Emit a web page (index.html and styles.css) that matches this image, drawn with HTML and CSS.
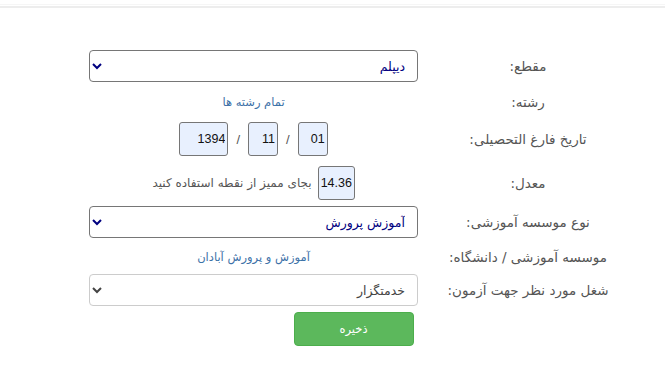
FILE: index.html
```html
<!DOCTYPE html>
<html lang="fa" dir="rtl">
<head>
    <meta charset="UTF-8">
    <meta name="viewport" content="width=device-width, initial-scale=1.0">
    <title>اطلاعات تحصیلی</title>
    <link rel="stylesheet" href="styles.css">
</head>
<body>
    <div class="topbar"></div>

    <!-- Education form -->
    <form class="edu-form" onsubmit="return false">
        <div class="row row-select">
            <label class="label" for="level">مقطع:</label>
            <div class="value">
                <select id="level" class="field field-navy">
                    <option>دیپلم</option>
                </select>
            </div>
        </div>

        <div class="row row-text">
            <span class="label">رشته:</span>
            <div class="value"><a href="#" class="link">تمام رشته ها</a></div>
        </div>

        <div class="row row-input">
            <span class="label">تاریخ فارغ التحصیلی:</span>
            <div class="value">
                <div class="date-group">
                    <input type="text" class="box box-sm" value="01">
                    <span class="slash">/</span>
                    <input type="text" class="box box-sm" value="11">
                    <span class="slash">/</span>
                    <input type="text" class="box box-lg" value="1394">
                </div>
            </div>
        </div>

        <div class="row row-input row-tight">
            <span class="label">معدل:</span>
            <div class="value">
                <div class="avg-group">
                    <input type="text" class="box box-md" value="14.36">
                    <span class="hint">بجای ممیز از نقطه استفاده کنید</span>
                </div>
            </div>
        </div>

        <div class="row row-select row-mid">
            <label class="label" for="inst-type">نوع موسسه آموزشی:</label>
            <div class="value">
                <select id="inst-type" class="field field-navy">
                    <option>آموزش پرورش</option>
                </select>
            </div>
        </div>

        <div class="row row-text row-short">
            <span class="label">موسسه آموزشی / دانشگاه:</span>
            <div class="value"><a href="#" class="link">آموزش و پرورش آبادان</a></div>
        </div>

        <div class="row row-select row-tight">
            <label class="label" for="job">شغل مورد نظر جهت آزمون:</label>
            <div class="value">
                <select id="job" class="field field-light">
                    <option>خدمتگزار</option>
                </select>
            </div>
        </div>

        <div class="actions">
            <button type="submit" class="btn-save">ذخیره</button>
        </div>
    </form>
</body>
</html>
```

FILE: styles.css
```css
/* Page */
body {
    margin: 0;
    padding: 0;
    background-color: #fff;
    font-family: "DejaVu Sans", sans-serif;
    color: #555;
}

.topbar {
    margin-top: 4px;
    height: 1px;
    border-top: 1px solid #f6f6f6;
    border-bottom: 2px solid #ededed;
}

/* Form layout */
.edu-form {
    width: 529px;
    margin: 42px 47px 0 0;
}

.row {
    display: grid;
    grid-template-columns: 180px 329px;
    column-gap: 20px;
    align-items: center;
    margin-bottom: 10px;
}

.row-select {
    height: 32px;
}

.row-text {
    height: 20px;
}

.row-input {
    height: 34px;
}

.row-tight {
    margin-bottom: 6px;
}

.row-mid {
    margin-bottom: 9px;
}

.row-short {
    margin-bottom: 7px;
}

.label {
    text-align: center;
    font-size: 13.5px;
    color: #555;
}

.value {
    display: flex;
    justify-content: center;
    align-items: center;
}

/* Selects */
.field {
    width: 329px;
    height: 32px;
    padding: 0 8px;
    font-family: "DejaVu Sans", sans-serif;
    font-size: 12.5px;
    background-color: #fff;
    border-radius: 4px;
}

.field-navy {
    color: #000080;
    border: 1px solid #767676;
}

.field-light {
    color: #444;
    border: 1px solid #ccc;
}

.link {
    color: #3e72a8;
    font-size: 11.5px;
    text-decoration: none;
}

/* Small inputs */
.date-group,
.avg-group {
    display: flex;
    align-items: center;
}

.box {
    height: 34px;
    box-sizing: border-box;
    padding: 0 2px;
    background-color: #e8f0fe;
    border: 1px solid #767676;
    border-radius: 3px;
    font-family: "Liberation Sans", sans-serif;
    font-size: 12.5px;
    color: #111;
    text-align: right;
    direction: ltr;
}

.box-sm {
    width: 30px;
}

.box-md {
    width: 37px;
}

.box-lg {
    width: 49px;
}

.slash {
    margin: 0 8px;
    font-family: "Liberation Sans", sans-serif;
    font-size: 13px;
    color: #555;
}

.hint {
    margin-right: 6px;
    font-size: 12px;
    color: #555;
}

/* Save button */
.actions {
    display: flex;
    justify-content: center;
}

.btn-save {
    width: 120px;
    height: 34px;
    background-color: #5cb85c;
    border: 1px solid #4cae4c;
    border-radius: 4px;
    color: #fff;
    font-family: "DejaVu Sans", sans-serif;
    font-size: 11.5px;
}
```
